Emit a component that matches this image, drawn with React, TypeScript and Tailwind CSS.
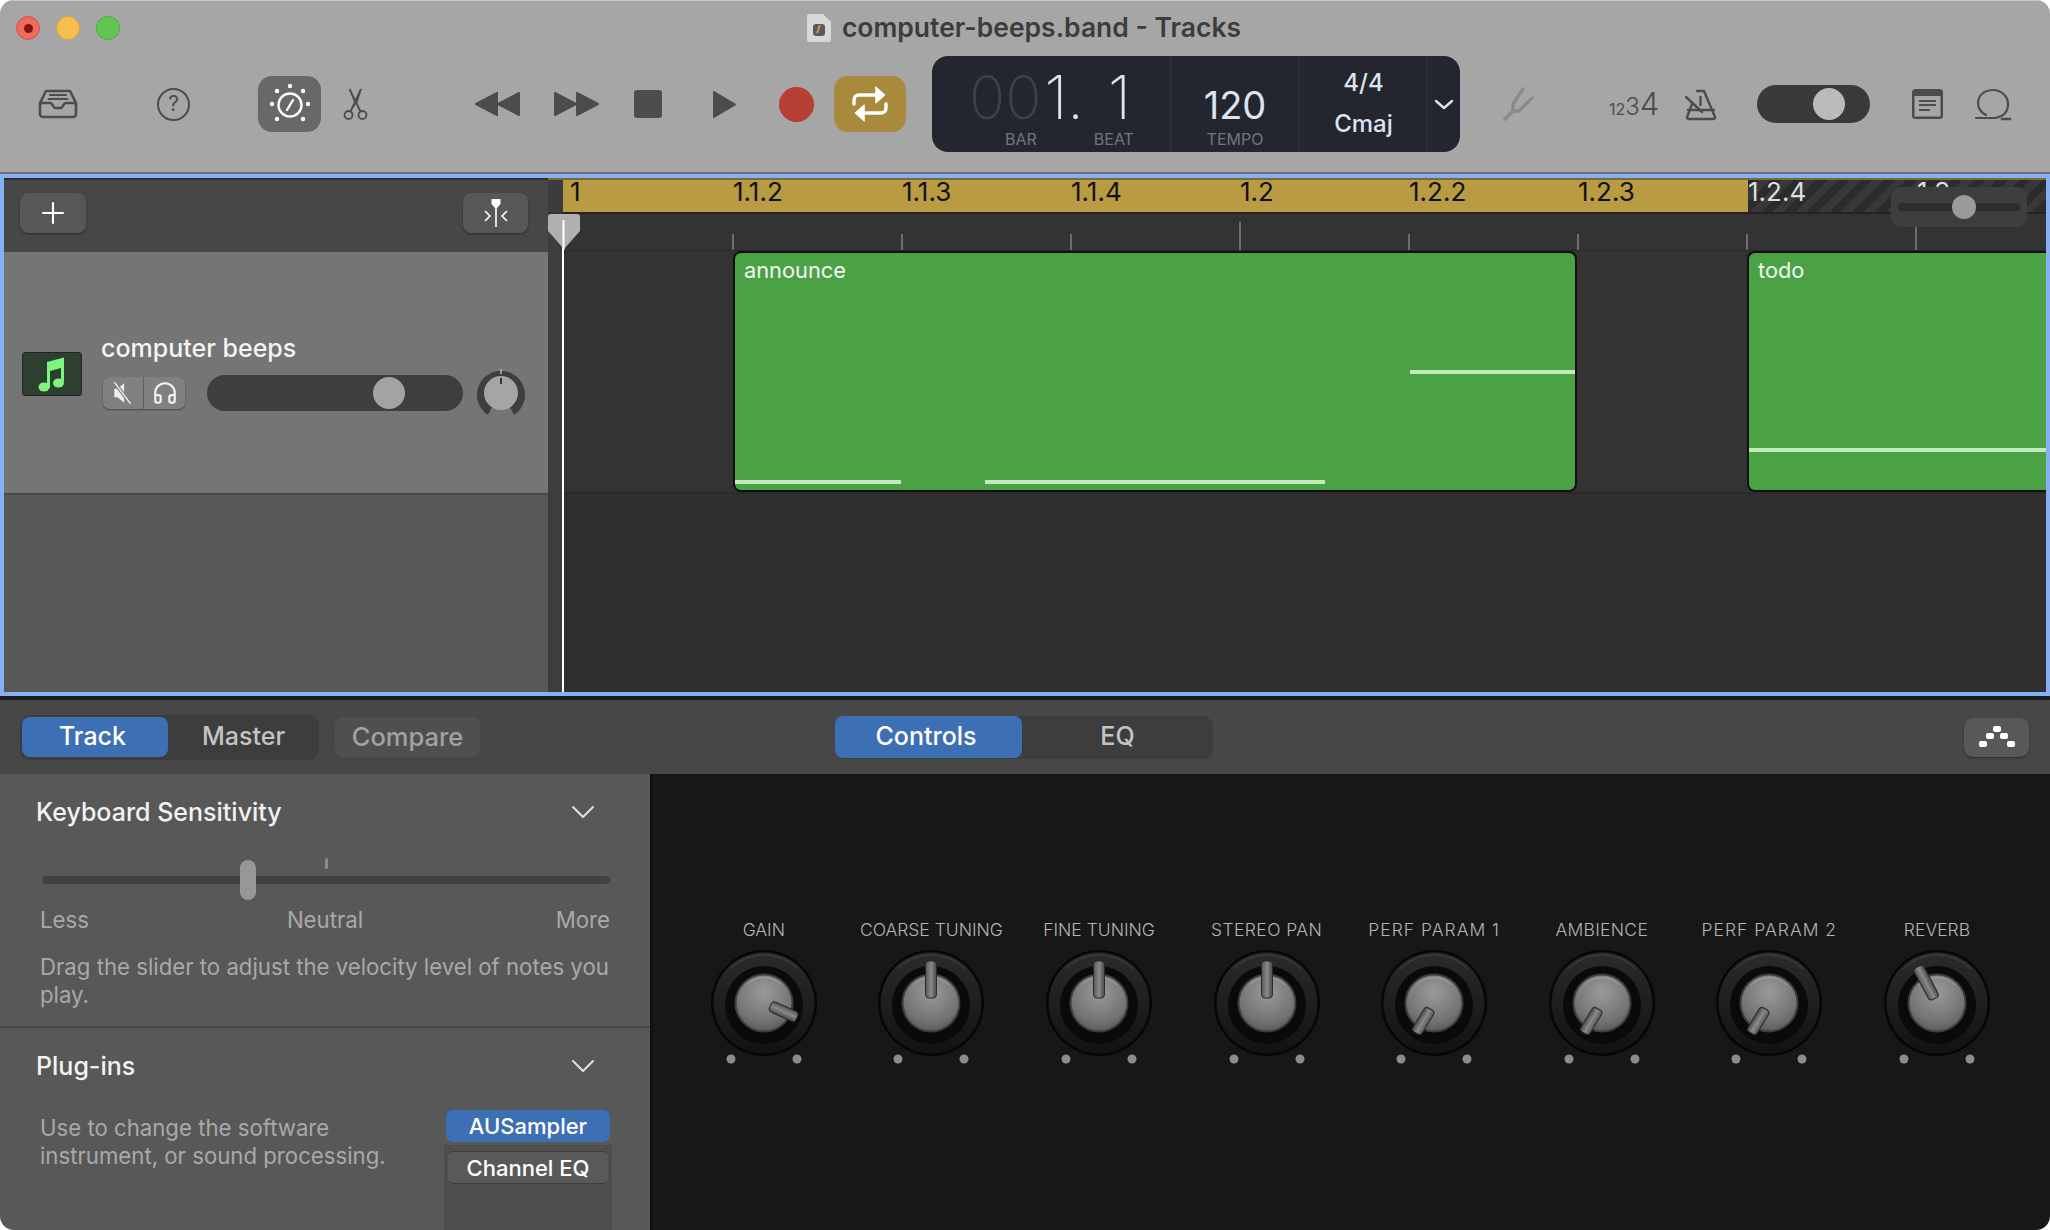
import { Headphones, Plus } from "lucide-react";

const ICON = "#4c4c4c";

const rulerGold = ["1.1.2", "1.1.3", "1.1.4", "1.2", "1.2.2", "1.2.3"];
const ticks = [false, false, false, true, false, false, false, true];

const knobs = [
  { label: "GAIN", angle: 114, from: 7, to: 36, track: "tracking-normal" },
  { label: "COARSE TUNING", angle: 0, from: 5, to: 42, track: "tracking-normal" },
  { label: "FINE TUNING", angle: 0, from: 5, to: 42, track: "tracking-normal" },
  { label: "STEREO PAN", angle: 0, from: 5, to: 42, track: "tracking-[0.4px]" },
  { label: "PERF PARAM 1", angle: 211, from: 7, to: 35, track: "tracking-[1px]" },
  { label: "AMBIENCE", angle: 211, from: 7, to: 35, track: "tracking-[0.3px]" },
  { label: "PERF PARAM 2", angle: 211, from: 7, to: 35, track: "tracking-[1px]" },
  { label: "REVERB", angle: -28, from: 5, to: 41, track: "tracking-normal" },
];

function Chevron() {
  return (
    <svg width="24" height="14" viewBox="0 0 24 14" fill="none" stroke="#e0e0e0" strokeWidth="2" strokeLinecap="round" strokeLinejoin="round">
      <path d="M2 2l10 10L22 2" />
    </svg>
  );
}

function Knob({ label, angle, from, to, track }: { label: string; angle: number; from: number; to: number; track: string }) {
  return (
    <div className="w-[167.6px] flex flex-col items-center shrink-0">
      <div className={`h-[24px] leading-[24px] text-[17.5px] font-light text-[#b4b4b4] whitespace-nowrap ${track}`}>{label}</div>
      <svg width="120" height="130" viewBox="0 0 120 130" className="mt-[5px]">
        <defs>
          <radialGradient id="face" cx="50%" cy="30%" r="75%">
            <stop offset="0%" stopColor="#9a9a9a" />
            <stop offset="70%" stopColor="#747474" />
            <stop offset="100%" stopColor="#585858" />
          </radialGradient>
          <linearGradient id="ring" x1="0" y1="0" x2="0" y2="1">
            <stop offset="0%" stopColor="#2b2b2b" />
            <stop offset="100%" stopColor="#121212" />
          </linearGradient>
          <linearGradient id="grip" x1="0" y1="0" x2="1" y2="0">
            <stop offset="0%" stopColor="#555" />
            <stop offset="50%" stopColor="#8a8a8a" />
            <stop offset="100%" stopColor="#484848" />
          </linearGradient>
        </defs>
        <circle cx="60" cy="56" r="53" fill="#060606" />
        <circle cx="60" cy="56" r="50.500" fill="url(#ring)" />
        <path d="M26 22A48 48 0 0 1 94 22" fill="none" stroke="#444" strokeWidth="1" />
        <circle cx="60" cy="58" r="39" fill="#0a0a0a" />
        <circle cx="60" cy="56" r="29.500" fill="#3e3e3e" />
        <circle cx="60" cy="56" r="27.500" fill="url(#face)" />
        <path d="M42 38A26 26 0 0 1 78 38" fill="none" stroke="#bbb" strokeOpacity="0.5" strokeWidth="1" />
        <g transform={`rotate(${angle} 60 56)`}>
          <rect x="54.500" y={56 - to} width="11" height={to - from} rx="3.500" fill="url(#grip)" stroke="#2a2a2a" strokeWidth="1" />
        </g>
        <circle cx="27" cy="112" r="4.500" fill="#8c8c8c" />
        <circle cx="93" cy="112" r="4.500" fill="#8c8c8c" />
      </svg>
    </div>
  );
}

export default function App() {
  return (
    <div className="w-[2050px] h-[1230px] bg-white overflow-hidden flex flex-col rounded-t-[14px] rounded-b-[14px] font-['Inter',sans-serif] text-white">
      {/* Title + toolbar */}
      <div className="h-[172px] shrink-0 bg-[#a6a6a6] flex flex-col border-t border-[#c8c8c8]">
        <div className="h-[54px] relative flex items-center justify-center">
          <div className="absolute left-[16px] top-[15px] flex gap-[16px]">
            <div className="w-[24px] h-[24px] rounded-full bg-[#ef6a5f] border border-[#d0574d] flex items-center justify-center">
              <div className="w-[9px] h-[9px] rounded-full bg-[#7e1510]" />
            </div>
            <div className="w-[24px] h-[24px] rounded-full bg-[#f6be4f] border border-[#dca53c]" />
            <div className="w-[24px] h-[24px] rounded-full bg-[#62c554] border border-[#4fa942]" />
          </div>
          <div className="flex items-center gap-[11px] ml-[-2px]">
            <svg width="24" height="28" viewBox="0 0 24 28">
              <path d="M2 0h14l8 8v18a2 2 0 0 1-2 2H2a2 2 0 0 1-2-2V2a2 2 0 0 1 2-2z" fill="#d8d8d8" />
              <rect x="6" y="10" width="12" height="12" rx="3" fill="#5a5a5a" />
              <path d="M13 11l-3 8" stroke="#c99a4a" strokeWidth="2" />
            </svg>
            <span className="text-[26.500px] font-semibold text-[#3c3c3c] whitespace-nowrap">computer-beeps.band - Tracks</span>
          </div>
        </div>
        <div className="h-[96px] mt-[1px] flex items-center text-[#4c4c4c]">
          <svg className="ml-[38px] shrink-0" width="40" height="30" viewBox="0 0 40 30" fill="none" stroke={ICON} strokeWidth="2.6" strokeLinejoin="round" strokeLinecap="round">
            <path d="M8 2h24l6 12v11a3 3 0 0 1-3 3H5a3 3 0 0 1-3-3V14z" />
            <path d="M2 14h10c2 0 2 1 3 3s2 2 3 2h4c1 0 2 0 3-2s1-3 3-3h10" />
            <path d="M12 6h16M10.500 10h19" strokeWidth="2" />
          </svg>
          <div className="ml-[79px] w-[33px] h-[33px] shrink-0 rounded-full border-[2.500px] border-[#4c4c4c] flex items-center justify-center text-[21px] font-normal">?</div>
          <div className="ml-[68px] w-[63px] h-[56px] shrink-0 rounded-[14px] bg-[#686868] flex items-center justify-center">
            <svg width="44" height="44" viewBox="0 0 44 44" fill="none" stroke="#fff" strokeWidth="2.400" strokeLinecap="round">
              <circle cx="22" cy="23" r="11.500" />
              <path d="M19 28l6-10" />
              <g fill="#fff" stroke="none">
                <circle cx="22" cy="4" r="2.200" />
                <circle cx="35" cy="9" r="2.200" />
                <circle cx="40" cy="22" r="2.200" />
                <circle cx="35" cy="37" r="2.200" />
                <circle cx="9" cy="37" r="2.200" />
                <circle cx="4" cy="22" r="2.200" />
                <circle cx="9" cy="9" r="2.200" />
              </g>
            </svg>
          </div>
          <svg className="ml-[22px] shrink-0" width="25" height="32" viewBox="0 0 25 32" fill="none" stroke={ICON} strokeWidth="1.800">
            <circle cx="5.500" cy="27" r="4" />
            <circle cx="19.500" cy="27" r="4" />
            <path d="M7.500 23.500L18 1l-5 15M17.500 23.500L6.500 1l5.500 13" fill={ICON} />
          </svg>
          <svg className="ml-[106px] shrink-0" width="47" height="26" viewBox="0 0 47 26" fill={ICON} stroke={ICON} strokeWidth="2" strokeLinejoin="round">
            <path d="M23 2v22L2 13zM45 2v22L24 13z" />
          </svg>
          <svg className="ml-[32px] shrink-0" width="47" height="26" viewBox="0 0 47 26" fill={ICON} stroke={ICON} strokeWidth="2" strokeLinejoin="round">
            <path d="M2 2v22l21-11zM24 2v22l21-11z" />
          </svg>
          <div className="ml-[34px] w-[28px] h-[28px] shrink-0 rounded-[3px] bg-[#4c4c4c]" />
          <svg className="ml-[50px] shrink-0" width="25" height="29" viewBox="0 0 25 29" fill={ICON} stroke={ICON} strokeWidth="2" strokeLinejoin="round">
            <path d="M2 2v25l21-12.500z" />
          </svg>
          <div className="ml-[42px] w-[35px] h-[35px] shrink-0 rounded-full bg-[#b73f33]" />
          <div className="ml-[20px] w-[72px] h-[56px] shrink-0 rounded-[14px] bg-[#a98a3c] flex items-center justify-center">
            <svg width="36" height="38" viewBox="0 0 36 38" fill="none" stroke="#fff" strokeWidth="3.400" strokeLinecap="round">
              <path d="M2 19v-4a5 5 0 0 1 5-5h18" />
              <path d="M34 19v4a5 5 0 0 1-5 5H11" />
              <path d="M24 2l9 8-9 8z" fill="#fff" strokeWidth="1" strokeLinejoin="round" />
              <path d="M12 20l-9 8 9 8z" fill="#fff" strokeWidth="1" strokeLinejoin="round" />
            </svg>
          </div>

          {/* LCD */}
          <div className="ml-[26px] w-[528px] h-[96px] shrink-0 rounded-[16px] bg-[#23262e] flex">
            <div className="w-[239px] border-r border-[#2f323a] pl-[37px] flex flex-col">
              <div className="h-[75px] pt-[12px] text-[60px] leading-[58px] font-extralight whitespace-nowrap">
                <span className="text-[#3d414c]">00</span>
                <span className="ml-[3px] text-[#dbe4f0]">1.</span>
                <span className="ml-[24px] text-[#dbe4f0]">1</span>
              </div>
              <div className="flex text-[16px] leading-[16px] text-[#6f7683]">
                <span className="ml-[36px]">BAR</span>
                <span className="ml-[57px]">BEAT</span>
              </div>
            </div>
            <div className="w-[129px] border-r border-[#2f323a] flex flex-col items-center">
              <div className="h-[75px] pt-[31px] text-[38px] leading-[37px] font-normal text-[#dbe4f0]">120</div>
              <div className="text-[16px] leading-[16px] text-[#6f7683]">TEMPO</div>
            </div>
            <div className="w-[128px] border-r border-[#2f323a] flex flex-col items-center pt-[12px] text-[#dbe4f0] text-[24px] leading-[30px] font-medium">
              <div>4/4</div>
              <div className="mt-[11px]">Cmaj</div>
            </div>
            <div className="flex-1 flex items-center justify-center">
              <svg width="20" height="11" viewBox="0 0 20 11" fill="none" stroke="#dbe4f0" strokeWidth="2.400" strokeLinecap="round" strokeLinejoin="round">
                <path d="M2 2l8 7 8-7" />
              </svg>
            </div>
          </div>

          <svg className="ml-[42px] shrink-0" width="33" height="36" viewBox="0 0 33 36" fill="none" stroke="#8a8a8a" strokeWidth="3.400" strokeLinecap="round" strokeLinejoin="round">
            <path d="M3 33l8-8h6l13-13M11 25v-7l10-15" />
          </svg>
          <div className="ml-[74px] w-[52px] shrink-0 flex items-baseline whitespace-nowrap text-[#4c4c4c]">
            <span className="text-[16px]">12</span>
            <span className="text-[24px] font-light">3</span>
            <span className="text-[31px] font-light">4</span>
          </div>
          <svg className="ml-[24px] shrink-0" width="32" height="33" viewBox="0 0 32 33" fill="none" stroke={ICON} strokeWidth="2.400" strokeLinejoin="round" strokeLinecap="round">
            <path d="M12 3h7l11 26a2 2 0 0 1-2 2H4a2 2 0 0 1-2-2l5-13" />
            <path d="M3 22h26" />
            <path d="M1 9l16 15" />
            <path d="M15.500 9v8" />
          </svg>
          <svg className="ml-[40px] shrink-0" width="113" height="38" viewBox="0 0 113 38">
            <rect width="113" height="38" rx="19" fill="#3a3a3a" />
            <ellipse cx="72" cy="19" rx="16" ry="16" fill="#bbb" />
          </svg>
          <svg className="ml-[42px] shrink-0" width="31" height="30" viewBox="0 0 31 30">
            <rect width="31" height="30" rx="3.500" fill="#4c4c4c" />
            <rect x="2.500" y="7" width="26" height="20.500" fill="#a6a6a6" />
            <path d="M7 12h17M7 16h17M7 21h11" stroke="#4c4c4c" strokeWidth="2" />
          </svg>
          <svg className="ml-[31px] shrink-0" width="38" height="33" viewBox="0 0 38 33" fill="none" stroke={ICON} strokeWidth="2.200" strokeLinecap="round">
            <path d="M12 27C6 24 4 20 4 15C4 7 11 2 19 2s15 6 15 14c0 8-5 13-14 14H2" />
            <path d="M28 31h8" strokeWidth="2.600" />
          </svg>
        </div>
      </div>
      <div className="h-[2px] shrink-0 bg-[#6f6f6f]" />

      {/* Tracks */}
      <div className="h-[522px] shrink-0 border-[4px] border-[#86b0f2] flex">
        <div className="w-[544px] shrink-0 bg-[#585858] flex flex-col">
          <div className="h-[74px] shrink-0 bg-[#474747] border-t-[2px] border-[#2e2e2e] flex items-center justify-between pl-[16px] pr-[20px] pb-[6px]">
            <div className="w-[66px] h-[40px] rounded-[8px] bg-[#575757] shadow-[0_1px_2px_#2a2a2a] flex items-center justify-center">
              <Plus size={34} strokeWidth={1.500} color="#fff" />
            </div>
            <div className="w-[65px] h-[40px] rounded-[8px] bg-[#575757] shadow-[0_1px_2px_#2a2a2a] flex items-center justify-center">
              <svg width="26" height="28" viewBox="0 0 26 28" fill="none" stroke="#fff" strokeWidth="1.600">
                <path d="M8.500 0h9v5l-3.500 4h-2l-3.500-4z" fill="#fff" stroke="none" />
                <path d="M13 8v20" />
                <path d="M2 12l5 5-5 5M24 12l-5 5 5 5" />
              </svg>
            </div>
          </div>
          <div className="h-[243px] shrink-0 bg-[#757575] border-b-[2px] border-[#484848] flex items-center pl-[18px]">
            <div className="w-[60px] h-[44px] mt-[2px] shrink-0 rounded-[3px] bg-[#2d4030] border border-[#232323] flex items-center justify-center">
              <svg width="28" height="36" viewBox="0 0 28 36" fill="#7ef57c">
                <path d="M9 6l17-4.500v24h-3V12L12 15v17H9z" />
                <ellipse cx="6" cy="31" rx="5.500" ry="4.500" />
                <ellipse cx="20.500" cy="27" rx="5.500" ry="4.500" />
              </svg>
            </div>
            <div className="ml-[19px] flex flex-col mt-[4px]">
              <div className="text-[25px] leading-[30px] font-medium text-[#f4f4f4] whitespace-nowrap">computer beeps</div>
              <div className="flex items-center mt-[6px]">
                <div className="ml-[2px] w-[82px] h-[32px] rounded-[7px] bg-[#808080] shadow-[0_1px_2px_#4a4a4a] flex">
                  <div className="w-[41px] border-r border-[#5f5f5f] flex items-center justify-center">
                    <svg width="24" height="24" viewBox="0 0 22 22" fill="#eee">
                      <path d="M12 2v18l-6-5H3V7h3z" />
                      <path d="M3 1l15 20" stroke="#808080" strokeWidth="3.400" />
                      <path d="M3 1l15 20" stroke="#eee" strokeWidth="1.300" />
                    </svg>
                  </div>
                  <div className="flex-1 flex items-center justify-center">
                    <Headphones size={26} strokeWidth={2} color="#f2f2f2" />
                  </div>
                </div>
                <div className="ml-[22px] w-[256px] h-[36px] rounded-full bg-[#3e3e3e] flex items-center pl-[166px]">
                  <div className="w-[32px] h-[32px] rounded-full bg-[#a3a3a3]" />
                </div>
                <svg className="ml-[13px]" width="50" height="48" viewBox="0 0 50 48">
                  <path d="M12 46A24 24 0 1 1 38 46L34 38H16z" fill="#3e3e3e" />
                  <circle cx="25" cy="24" r="17" fill="#a5a5a5" />
                  <path d="M25 0v5" stroke="#7ce07c" strokeWidth="1.500" />
                  <path d="M25 9v6" stroke="#111" strokeWidth="1.500" />
                </svg>
              </div>
            </div>
          </div>
          <div className="flex-1" />
        </div>

        <div className="flex-1 min-w-0 relative bg-[#333333] flex flex-col">
          <div className="h-[34px] shrink-0 flex bg-[#3c3c3c] border-t-[2px] border-[#7a6a38] text-[26px] leading-[23px] whitespace-nowrap">
            <div className="w-[15px] shrink-0" />
            <div className="w-[1185px] shrink-0 bg-[#b89b42] flex text-[#111]">
              <div className="w-[170px] shrink-0 pl-[7px]">1</div>
              {rulerGold.map((t) => (
                <div key={t} className="w-[169px] shrink-0">{t}</div>
              ))}
            </div>
            <div className="flex-1 flex text-[#dedede] bg-[repeating-linear-gradient(135deg,#2b2b2b_0,#2b2b2b_8px,#383838_8px,#383838_16px)]">
              <div className="w-[169px] shrink-0">1.2.4</div>
              <div>1.3</div>
            </div>
          </div>
          <div className="h-[2px] shrink-0 bg-[#232323] ml-[15px]" />
          <div className="h-[37px] shrink-0 flex items-end pl-[184px] border-b border-[#2a2a2a]">
            {ticks.map((tall, i) => (
              <div key={i} className="w-[169px] shrink-0">
                <div className={tall ? "w-[2px] h-[28px] bg-[#6c6c6c]" : "w-[2px] h-[16px] bg-[#6c6c6c]"} />
              </div>
            ))}
          </div>
          <div className="h-[243px] shrink-0 relative border-b-[2px] border-[#2a2a2a]">
            <div className="absolute left-[185px] top-0 w-[844px] h-[241px] rounded-[8px] border-[2px] border-[#101010] bg-[#4ba244]">
              <div className="pl-[9px] pt-[2px] text-[21.800px] leading-[30px] text-[#f4f4f4]">announce</div>
              <div className="absolute left-0 top-[227px] w-[166px] h-[4px] bg-[#c2ebbd]" />
              <div className="absolute left-[250px] top-[227px] w-[340px] h-[4px] bg-[#c2ebbd]" />
              <div className="absolute left-[675px] top-[117px] w-[165px] h-[4px] bg-[#c2ebbd]" />
            </div>
            <div className="absolute left-[1199px] top-0 w-[299px] h-[241px] rounded-l-[8px] border-[2px] border-r-0 border-[#101010] bg-[#4ba244]">
              <div className="pl-[9px] pt-[2px] text-[21.800px] leading-[30px] text-[#f4f4f4]">todo</div>
              <div className="absolute left-0 top-[195px] w-[297px] h-[4px] bg-[#c2ebbd]" />
            </div>
          </div>
          <div className="flex-1 bg-[#2f2f2f]" />

          {/* strip beside the track list */}
          <div className="absolute left-0 top-[36px] bottom-0 w-[15px] bg-[#3d3d3d]" />
          {/* playhead */}
          <div className="absolute left-[14px] top-[36px] bottom-0 w-[2px] bg-white" />
          <svg className="absolute left-0 top-[36px]" width="32" height="36" viewBox="0 0 32 36">
            <path d="M3 0h26a3 3 0 0 1 3 3v14L16 35 0 17V3a3 3 0 0 1 3-3z" fill="#b0b0b0" />
            <path d="M15.500 6v30" stroke="#fff" strokeWidth="2" />
          </svg>
          {/* zoom slider */}
          <div className="absolute left-[1343px] top-[9px] w-[136px] h-[40px] rounded-[10px] bg-[#3e3e3e] flex items-center px-[7px]">
            <div className="w-full h-[8px] rounded-full bg-[#2d2d2d]" />
            <div className="absolute left-[61px] top-[8px] w-[24px] h-[24px] rounded-full bg-[#9a9a9a]" />
          </div>
        </div>
      </div>

      {/* Smart controls */}
      <div className="h-[4px] shrink-0 bg-[#1c1c1c]" />
      <div className="h-[74px] shrink-0 bg-[#474747] flex items-center text-[25px] shadow-[0_1px_2px_#2a2a2a]">
        <div className="ml-[20px] w-[299px] h-[45px] rounded-[10px] bg-[#3d3d3d] flex items-center pl-[2px]">
          <div className="w-[146px] h-[40px] pr-[5px] rounded-[8px] bg-[#3d6fb5] flex items-center justify-center font-medium">Track</div>
          <div className="flex-1 text-center text-[#c4c4c4] font-medium">Master</div>
        </div>
        <div className="ml-[16px] w-[145px] h-[40px] rounded-[8px] bg-[#4f4f4f] flex items-center justify-center text-[#a2a2a2] text-[25.500px] font-medium">Compare</div>
        <div className="ml-[355px] w-[378px] h-[43px] rounded-[10px] bg-[#3d3d3d] flex items-center">
          <div className="w-[187px] h-[42px] pr-[5px] rounded-[8px] bg-[#3d6fb5] flex items-center justify-center font-medium">Controls</div>
          <div className="flex-1 text-center text-[#c4c4c4] font-medium">EQ</div>
        </div>
        <div className="ml-[751px] w-[65px] h-[39px] rounded-[9px] bg-[#585858] shadow-[0_1px_2px_#2a2a2a] flex items-center justify-center">
          <svg width="36" height="22" viewBox="0 0 36 22" fill="#fff">
            <rect x="14" y="0" width="8" height="6" rx="2" />
            <rect x="7" y="7" width="8" height="6" rx="2" />
            <rect x="21" y="7" width="8" height="6" rx="2" />
            <rect x="0" y="15" width="8" height="6" rx="2" />
            <rect x="28" y="15" width="8" height="6" rx="2" />
          </svg>
        </div>
      </div>

      <div className="flex-1 flex min-h-0">
        <div className="w-[650px] shrink-0 bg-[#585858] flex flex-col text-[#a9a9a9] text-[22.200px] leading-[28px]">
          <div className="h-[76px] shrink-0 pl-[36px] pr-[55px] flex items-center justify-between text-[25px] font-medium text-[#f2f2f2]">
            <span>Keyboard Sensitivity</span>
            <Chevron />
          </div>
          <div className="mt-[8px] ml-[42px] mr-[40px] h-[42px] relative flex items-center shrink-0">
            <div className="w-full h-[8px] mt-[2px] rounded-full bg-[#424242]" />
            <div className="absolute left-[198px] top-[2px] w-[16px] h-[40px] rounded-full bg-[#979797]" />
            <div className="absolute left-[283px] top-0 w-[3px] h-[11px] rounded-full bg-[#8a8a8a]" />
          </div>
          <div className="mt-[6px] px-[40px] grid grid-cols-3 shrink-0">
            <span>Less</span>
            <span className="text-center">Neutral</span>
            <span className="text-right">More</span>
          </div>
          <p className="mt-[19px] pl-[40px] pr-[30px] shrink-0">Drag the slider to adjust the velocity level of notes you play.</p>
          <div className="mt-[17px] h-[2px] bg-[#474747] shrink-0" />
          <div className="h-[76px] shrink-0 pl-[36px] pr-[55px] flex items-center justify-between text-[25px] font-medium text-[#f2f2f2]">
            <span>Plug-ins</span>
            <Chevron />
          </div>
          <div className="flex-1 flex pl-[40px] min-h-0">
            <p className="w-[404px] pr-[30px] mt-[10px] shrink-0">Use to change the software instrument, or sound processing.</p>
            <div className="w-[168px] shrink-0 flex flex-col items-center text-[22px]">
              <div className="w-[164px] h-[32px] mt-[6px] rounded-[7px] bg-[#3d6fb5] text-white font-medium flex items-center justify-center">AUSampler</div>
              <div className="w-full flex-1 mt-[3px] bg-[#4f4f4f] flex flex-col items-center">
                <div className="w-[164px] h-[33px] mt-[6px] rounded-[7px] bg-[#595959] border border-[#3f3f3f] text-white font-medium flex items-center justify-center">Channel EQ</div>
              </div>
            </div>
          </div>
        </div>
        <div className="flex-1 bg-[#171717] border-l-[3px] border-[#111] pt-[144px] pl-[27px] flex items-start">
          {knobs.map((k) => (
            <Knob key={k.label} {...k} />
          ))}
        </div>
      </div>
    </div>
  );
}
